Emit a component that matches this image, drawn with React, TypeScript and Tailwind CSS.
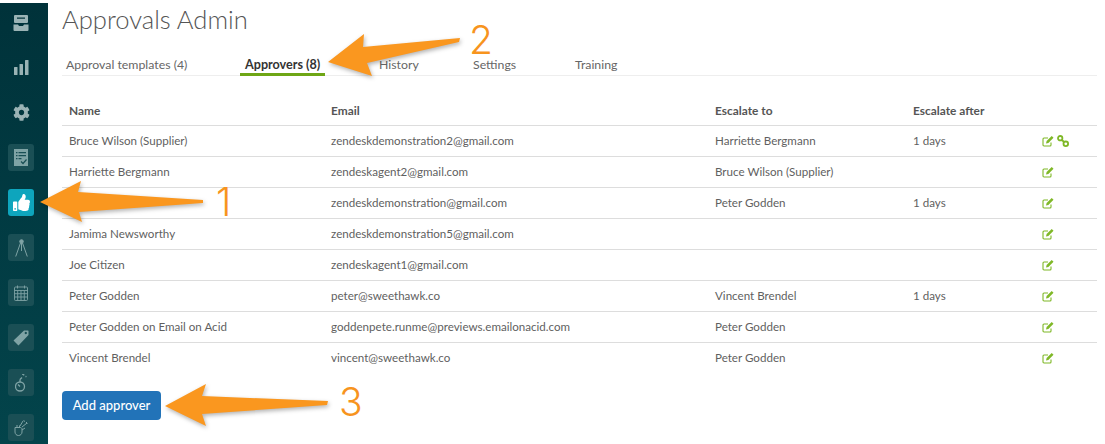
import React from 'react';
import { FaCog, FaThumbsUp } from 'react-icons/fa';

const approvers = [
  { name: 'Bruce Wilson (Supplier)', email: 'zendeskdemonstration2@gmail.com', escalate: 'Harriette Bergmann', after: '1 days', link: true },
  { name: 'Harriette Bergmann', email: 'zendeskagent2@gmail.com', escalate: 'Bruce Wilson (Supplier)', after: '' },
  { name: 'Dave Hayes', email: 'zendeskdemonstration@gmail.com', escalate: 'Peter Godden', after: '1 days' },
  { name: 'Jamima Newsworthy', email: 'zendeskdemonstration5@gmail.com', escalate: '', after: '' },
  { name: 'Joe Citizen', email: 'zendeskagent1@gmail.com', escalate: '', after: '' },
  { name: 'Peter Godden', email: 'peter@sweethawk.co', escalate: 'Vincent Brendel', after: '1 days' },
  { name: 'Peter Godden on Email on Acid', email: 'goddenpete.runme@previews.emailonacid.com', escalate: 'Peter Godden', after: '' },
  { name: 'Vincent Brendel', email: 'vincent@sweethawk.co', escalate: 'Peter Godden', after: '' },
];

function Tile({ children, active }: { children: React.ReactNode; active?: boolean }) {
  return (
    <div className={`flex h-[27px] w-[26px] shrink-0 items-center justify-center rounded-[3px] ${active ? 'bg-[#0ea5bd] text-white' : 'bg-[#1a4f55] text-[#7fa3a5]'}`}>
      {children}
    </div>
  );
}

// box outline with a solid pencil, the library only has the all-outline one
function EditIcon() {
  return (
    <svg width="12" height="12" viewBox="0 0 12 12" fill="currentColor">
      <path d="M9 7.500V10a1 1 0 0 1-1 1H2a1 1 0 0 1-1-1V4a1 1 0 0 1 1-1h4" fill="none" stroke="currentColor" strokeWidth="1.100" />
      <path d="M4 8.500l.6-2.400L9.700 1l1.800 1.800L6.400 7.900z" />
    </svg>
  );
}

function Sidebar() {
  return (
    <div className="flex w-[48px] shrink-0 flex-col items-start gap-[18px] overflow-hidden bg-gradient-to-b from-[#00323a] to-[#03444b] pl-[8px] pt-[6px] text-[#9ab3b5]">
      <div className="flex h-[27px] w-[26px] shrink-0 items-center justify-center">
        <svg width="16" height="16" viewBox="0 0 16 16" fill="currentColor">
          <path d="M2 0h12a1 1 0 0 1 1 1v6a1 1 0 0 1-1 1H2a1 1 0 0 1-1-1V1a1 1 0 0 1 1-1zm2 2.500v1.200h8V2.500zM0.500 9.500H5l1 1.500h4l1-1.500h4.500V15a1 1 0 0 1-1 1H1.500a1 1 0 0 1-1-1z" fillRule="evenodd" />
        </svg>
      </div>
      <div className="flex h-[27px] w-[26px] shrink-0 items-center justify-center">
        <svg width="15" height="15" viewBox="0 0 15 15" fill="currentColor">
          <rect x="0" y="7" width="3.500" height="8" rx="0.500" />
          <rect x="5.500" y="4" width="3.500" height="11" rx="0.500" />
          <rect x="11" y="0" width="3.500" height="15" rx="0.500" />
        </svg>
      </div>
      <div className="flex h-[27px] w-[26px] shrink-0 items-center justify-center">
        <FaCog size={17} />
      </div>
      <Tile>
        <svg width="14" height="17" viewBox="0 0 14 17" fill="currentColor">
          <path fillRule="evenodd" d="M0 0h14v17H0zM2 3v1.200h1.500V3zM4.500 3v1.200h7.500V3zM2 6v1.200h1.500V6zM4.500 6v1.200h7.500V6zM2 9v1.200h1.500V9zM4.500 9v1.200h3V9z" />
          <path d="M7 12.500l2 2 3.500-4" fill="none" stroke="#1a4f55" strokeWidth="1.200" />
        </svg>
      </Tile>
      <Tile active>
        <FaThumbsUp size={17} />
      </Tile>
      <Tile>
        <svg width="13" height="18" viewBox="0 0 13 18" fill="none" stroke="currentColor" strokeWidth="1">
          <circle cx="6.500" cy="2.500" r="1.800" fill="currentColor" />
          <path d="M5.500 4L0.700 17.500M7.500 4l4.800 13.500M6.500 4v8" />
        </svg>
      </Tile>
      <Tile>
        <svg width="14" height="16" viewBox="0 0 14 16" fill="none" stroke="currentColor" strokeWidth="0.900">
          <rect x="0.500" y="2" width="13" height="13.500" rx="1" />
          <path d="M0.500 5.500h13M0.500 8.700h13M0.500 12h13M3.700 5.500v10M7 5.500v10M10.300 5.500v10M3.500 0.500v3M10.500 0.500v3" />
        </svg>
      </Tile>
      <Tile>
        <svg width="16" height="16" viewBox="0 0 16 16" fill="currentColor">
          <path fillRule="evenodd" d="M11 0.500h4a.5.500 0 0 1 .5.500v4L5.500 15.500 0.500 10.500zM12.800 1.800a1.200 1.200 0 1 0 .01 0z" />
        </svg>
      </Tile>
      <Tile>
        <svg width="12" height="18" viewBox="0 0 12 18" fill="none" stroke="currentColor" strokeWidth="1.300">
          <circle cx="5" cy="12.500" r="4.500" />
          <path d="M5 8V5.500M5 5.500L7 3.500M3 10.500l2 2M8.500 0.500l.6.800M10.500 2.500l1 .2M7.800 0v1" />
        </svg>
      </Tile>
      <Tile>
        <svg width="15" height="17" viewBox="0 0 15 17" fill="none" stroke="currentColor" strokeWidth="1">
          <path d="M1 8.500v4.500c0 2 1.500 3.500 3.500 3.500S8 15 8 13v-3c0-1-1-1.500-2-1.500H1zM3 8.500V6M5.500 8.500V6.500M6 7l3-5M8 8l5-4M9.500 1.500l1.500 1M12 3l1.500 1.500M8 11l3-2" />
        </svg>
      </Tile>
    </div>
  );
}

function Arrows() {
  return (
    <svg className="pointer-events-none absolute left-0 top-0 drop-shadow-[1px_2px_2px_rgba(0,0,0,0.3)]" width="1105" height="444" viewBox="0 0 1105 444">
      <path fill="#fa971f" d="M40 202L81 181L78 192L203 200L203 203L79 212L82 222Z" />
      <path fill="#fa971f" d="M328 62L364 34L363 47L460 38L459 42L367 63L372 76Z" />
      <path fill="#fa971f" d="M165 406L206 384L202 396L328 401L327 405L202 414L206 426Z" />
    </svg>
  );
}

export default function App() {
  return (
    <div className="relative h-[444px] w-[1105px] overflow-hidden bg-white pt-[3px] font-['Lato',sans-serif] text-[11.6px] text-[#5f5f5f]">
      <div className="flex h-[441px]">
        <Sidebar />
        <div className="flex-1 pl-[14px] pr-[8px]">
          <h1 className="text-[25.6px] leading-[32px] font-light text-[#555]">Approvals Admin</h1>
          <div className="mt-[16px] flex h-[25px] items-start border-b border-[#eee] pt-[6px] text-[12.3px] leading-[16px] text-[#666]">
            <div className="ml-[4px] w-[174px]">Approval templates (4)</div>
            <div className="h-[19px] w-[85px] border-b-[3px] border-[#6ea615] pl-[5px] text-[12.6px] font-bold text-[#333]">Approvers (8)</div>
            <div className="ml-[54px] w-[94px]">History</div>
            <div className="w-[102px]">Settings</div>
            <div>Training</div>
          </div>
          <table className="mt-[18px] w-full table-fixed border-collapse">
            <colgroup>
              <col className="w-[269px]" />
              <col className="w-[384px]" />
              <col className="w-[198px]" />
              <col className="w-[129px]" />
              <col />
            </colgroup>
            <thead>
              <tr className="h-[31px] text-left text-[11.9px] font-bold text-[#555]">
                <th className="pl-[7px] pt-[3px]">Name</th>
                <th className="pt-[3px]">Email</th>
                <th className="pt-[3px]">Escalate to</th>
                <th className="pt-[3px]">Escalate after</th>
                <th />
              </tr>
            </thead>
            <tbody>
              {approvers.map(row => (
                <tr key={row.email} className="h-[31px] border-t border-[#ddd]">
                  <td className="pl-[7px]">{row.name}</td>
                  <td>{row.email}</td>
                  <td>{row.escalate}</td>
                  <td>{row.after}</td>
                  <td>
                    <div className="flex items-center gap-[3px] text-[#7fb827]">
                      <EditIcon />
                      {row.link && (
                        <svg width="12" height="12" viewBox="0 0 12 12" fill="none" stroke="currentColor" strokeWidth="1.800">
                          <circle cx="3.200" cy="3.200" r="2.200" />
                          <circle cx="8.800" cy="8.800" r="2.300" />
                          <path d="M5 5l2 2" />
                        </svg>
                      )}
                    </div>
                  </td>
                </tr>
              ))}
            </tbody>
          </table>
          <button className="mt-[18px] h-[29px] w-[99px] rounded-[4px] bg-[#2273b8] text-[13px] font-medium text-white">Add approver</button>
        </div>
      </div>
      <Arrows />
      <span className="absolute left-[216px] top-[187px] font-['Inter',sans-serif] text-[39px] leading-[30px] font-light text-[#f7941e]">1</span>
      <span className="absolute left-[469px] top-[25px] font-['Inter',sans-serif] text-[39px] leading-[30px] font-light text-[#f7941e]">2</span>
      <span className="absolute left-[339px] top-[387px] font-['Inter',sans-serif] text-[39px] leading-[30px] font-light text-[#f7941e]">3</span>
    </div>
  );
}
